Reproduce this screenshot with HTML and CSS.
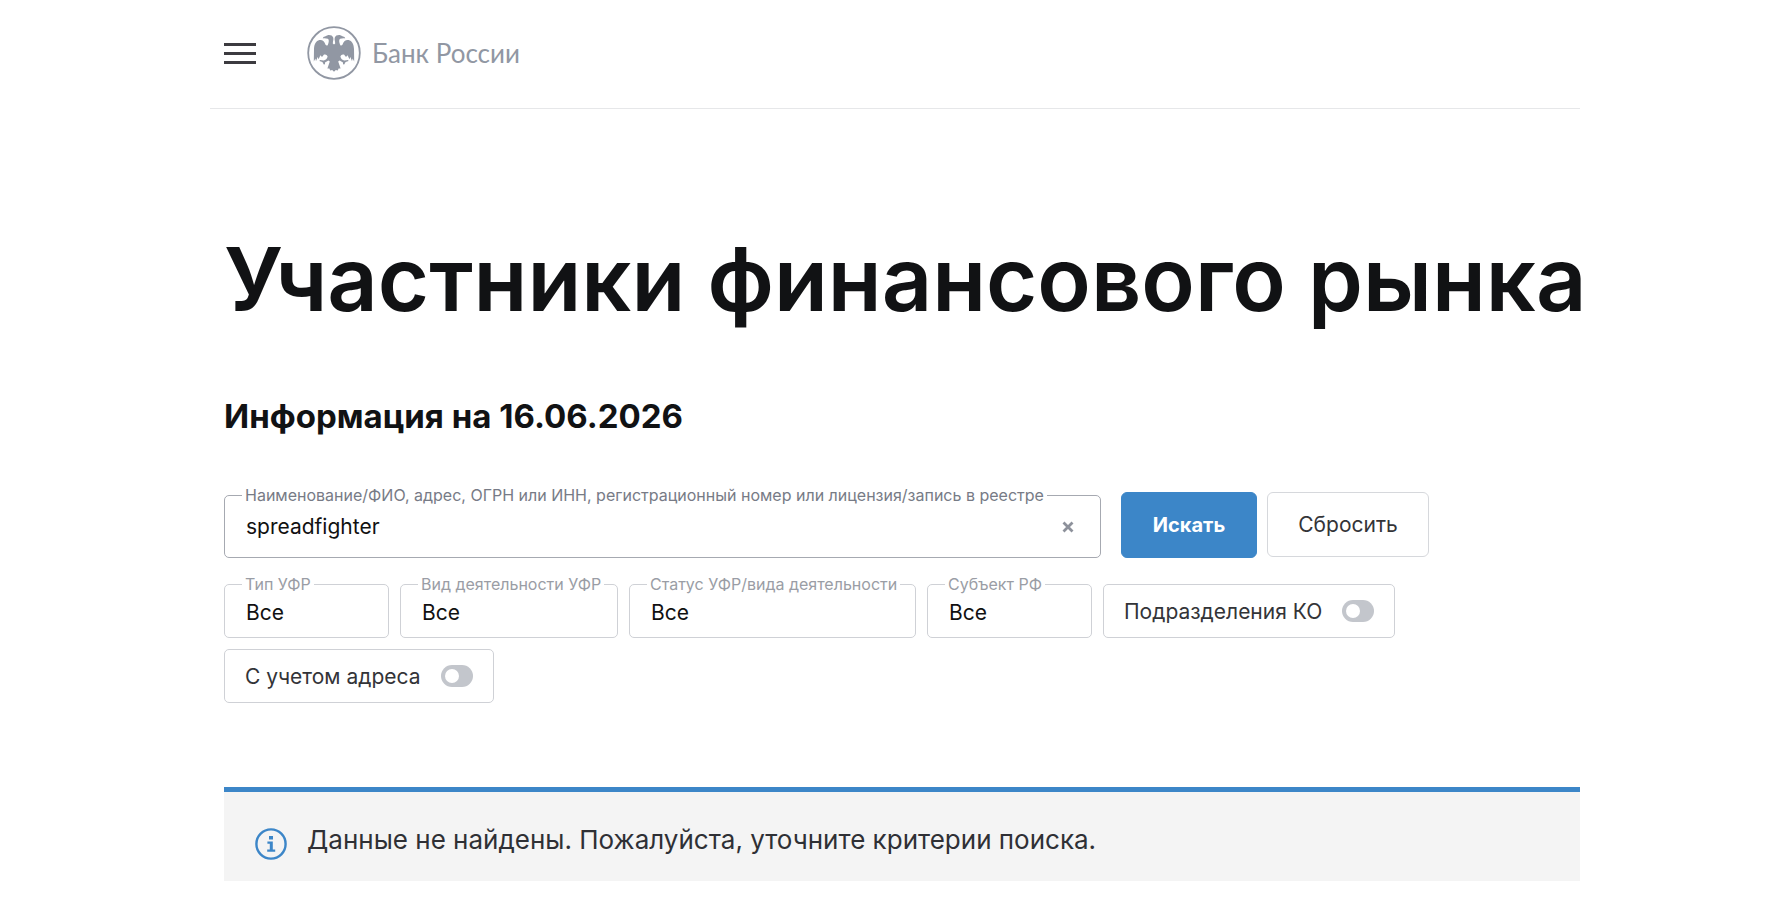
FILE: index.html
```html
<!DOCTYPE html>
<html lang="ru">
<head>
    <meta charset="UTF-8">
    <meta name="viewport" content="width=device-width, initial-scale=1.0">
    <title>Участники финансового рынка | Банк России</title>
    <link rel="stylesheet" href="styles.css">
</head>
<body>

<div class="page">
    <header class="header">
        <button class="menu-btn" type="button" aria-label="Меню">
            <span></span>
            <span></span>
            <span></span>
        </button>
        <a class="logo" href="#">
            <svg class="logo-icon" viewBox="0 0 54 54" aria-hidden="true">
                <circle cx="27" cy="27" r="25.8" fill="none" stroke="currentColor" stroke-width="1.8"/>
                <path fill="currentColor" d="M27 18.5 L25.8 17.5 C25.9 15 26.8 13.6 26.2 11.6 C25.5 9.6 23.2 8.8 20.8 9.2 C19.6 9.5 18.8 10.6 16.4 10.9 L15.8 12.4 C17.8 12 19.4 12.4 20.8 12.8 C22.2 13.6 22 15.8 21 18.4 C20.2 20.4 18.6 19.6 18 17.6 C17.4 15.2 15 13.4 12.4 14 C9 14.8 7.2 18 7 23 L6.8 35.6 L8.4 32.6 L9 35.2 L10.6 31 L11.6 33.2 L13.4 29.2 L15 31 L17 28.6 C18.4 28 20 28.6 20.6 30.4 C20.2 32.6 18.6 34 16.6 34.6 L13 34 L12.4 35 L15.4 36 L16.8 38.4 L18 38.2 L18 36.4 L21.4 34.6 L22.8 35.4 L20.4 42.6 L22.4 42.6 L23.2 44.6 L25.2 44 L27 45.8 L28.8 44 L30.8 44.6 L31.6 42.6 L33.6 42.6 L31.2 35.4 L32.6 34.6 L36 36.4 L36 38.2 L37.2 38.4 L38.6 36 L41.6 35 L41 34 L37.4 34.6 C35.4 34 33.8 32.6 33.4 30.4 C34 28.6 35.6 28 37 28.6 L39 31 L40.6 29.2 L42.4 33.2 L43.4 31 L45 35.2 L45.6 32.6 L47.2 35.6 L47 23 C46.8 18 45 14.8 41.6 14 C39 13.4 36.6 15.2 36 17.6 C35.4 19.6 33.8 20.4 33 18.4 C32 15.8 31.8 13.6 33.2 12.8 C34.6 12.4 36.2 12 38.2 12.4 L37.6 10.9 C35.2 10.6 34.4 9.5 33.2 9.2 C30.8 8.8 28.5 9.6 27.8 11.6 C27.2 13.6 28.1 15 28.2 17.5 Z"/>
            </svg>
            <span class="logo-text">Банк России</span>
        </a>
    </header>

    <main class="content">
        <h1>Участники финансового рынка</h1>
        <h2>Информация на 16.06.2026</h2>

        <form class="search-form" onsubmit="return false">
            <div class="search-row">
                <div class="field field-search">
                    <label for="search">Наименование/ФИО, адрес, ОГРН или ИНН, регистрационный номер или лицензия/запись в реестре</label>
                    <input type="text" id="search" value="spreadfighter">
                    <button class="clear-btn" type="button" aria-label="Очистить">
                        <svg viewBox="0 0 12 12" aria-hidden="true">
                            <path d="M1.5 1.5 L10.5 10.5 M10.5 1.5 L1.5 10.5" stroke="currentColor" stroke-width="2.8"/>
                        </svg>
                    </button>
                </div>
                <div class="buttons">
                    <button class="btn btn-primary" type="submit">Искать</button>
                    <button class="btn btn-reset" type="reset">Сбросить</button>
                </div>
            </div>

            <div class="filters">
                <div class="field field-small">
                    <label for="type">Тип УФР</label>
                    <select id="type"><option>Все</option></select>
                </div>
                <div class="field field-medium">
                    <label for="activity">Вид деятельности УФР</label>
                    <select id="activity"><option>Все</option></select>
                </div>
                <div class="field field-large">
                    <label for="status">Статус УФР/вида деятельности</label>
                    <select id="status"><option>Все</option></select>
                </div>
                <div class="field field-small">
                    <label for="region">Субъект РФ</label>
                    <select id="region"><option>Все</option></select>
                </div>
                <label class="toggle" for="branches">
                    Подразделения КО
                    <input type="checkbox" id="branches">
                </label>
                <label class="toggle" for="address">
                    С учетом адреса
                    <input type="checkbox" id="address">
                </label>
            </div>
        </form>

        <div class="message">
            <svg class="message-icon" viewBox="0 0 32 32" aria-hidden="true">
                <circle cx="16" cy="16" r="14.6" fill="none" stroke="currentColor" stroke-width="2.4"/>
                <path fill="currentColor" d="M14 8h4v3.4h-4z M12.4 13.4h5.4v8h2.4v2.4h-8v-2.4h2.6v-5.6h-2.4z"/>
            </svg>
            <p>Данные не найдены. Пожалуйста, уточните критерии поиска.</p>
        </div>
    </main>
</div>

</body>
</html>
```

FILE: styles.css
```css
* {
    box-sizing: border-box;
}
body {
    margin: 0;
    padding-right: 2px;
    background-color: #fff;
    color: #111214;
    font-family: Inter, Roboto, sans-serif;
    font-size: 21px;
}
button, input, select {
    font-family: inherit;
    font-size: 21px;
}
.page {
    max-width: 1370px;
    margin: 0 auto;
}
.header {
    display: flex;
    align-items: center;
    gap: 51px;
    height: 109px;
    padding: 0 0 2px 14px;
    border-bottom: 1px solid #e6e7e9;
}
.menu-btn {
    display: flex;
    flex-direction: column;
    gap: 6px;
    width: 32px;
    padding: 0;
    border: none;
    background: none;
    cursor: pointer;
}
.menu-btn span {
    height: 3px;
    background-color: #3c3b40;
}
.logo {
    display: flex;
    align-items: center;
    gap: 11px;
    color: #9197a3;
    text-decoration: none;
}
.logo-icon {
    width: 54px;
    height: 54px;
}
.logo-text {
    font-family: Lato, "Open Sans", sans-serif;
    font-size: 26px;
    line-height: 32px;
}
.content {
    padding-left: 14px;
}
h1 {
    margin: 117px 0 0;
    font-size: 88px;
    font-weight: 600;
    line-height: 106px;
    white-space: nowrap;
}
h2 {
    margin: 64px 0 56px;
    font-size: 33px;
    font-weight: 700;
    line-height: 40px;
}
.search-row {
    display: flex;
    gap: 20px;
    margin-bottom: 26px;
}
.field {
    position: relative;
    border: 1px solid #cfd1d6;
    border-radius: 5px;
}
.field label {
    position: absolute;
    top: -10px;
    left: 17px;
    padding: 0 3px;
    background-color: #fff;
    color: #9a9da5;
    font-size: 16px;
    line-height: 18px;
    white-space: nowrap;
}
.field input,
.field select {
    width: 100%;
    height: 100%;
    padding: 2px 21px 0;
    border: none;
    outline: none;
    background: none;
    color: #111;
    appearance: none;
}
.field-search {
    flex: 0 1 877px;
    height: 63px;
    margin-top: 3px;
    border-color: #a6a9b1;
}
.field-search label {
    color: #777b86;
}
.field-search input {
    padding: 0 60px 0 21px;
}
.clear-btn {
    position: absolute;
    top: 50%;
    right: 26px;
    width: 12px;
    height: 12px;
    margin-top: -6px;
    padding: 0;
    border: none;
    background: none;
    color: #8d919b;
    cursor: pointer;
}
.clear-btn svg {
    display: block;
}
.buttons {
    display: flex;
    align-items: flex-start;
    gap: 10px;
}
.btn {
    height: 65px;
    border: 1px solid #d6d8dc;
    border-radius: 6px;
    background-color: #fff;
    color: #333438;
    cursor: pointer;
}
.btn-primary {
    width: 136px;
    height: 66px;
    border-color: #3c86c8;
    background-color: #3c86c8;
    color: #fff;
    font-size: 20px;
    font-weight: 700;
}
.btn-reset {
    width: 162px;
}
.filters {
    display: flex;
    flex-wrap: wrap;
    gap: 11px;
}
.filters .field,
.toggle {
    height: 54px;
}
.field-small {
    width: 165px;
}
.field-medium {
    width: 218px;
}
.field-large {
    width: 287px;
}
.toggle {
    display: flex;
    align-items: center;
    gap: 20px;
    padding: 0 20px;
    border: 1px solid #cfd1d6;
    border-radius: 5px;
    color: #333438;
    cursor: pointer;
}
.toggle input {
    display: flex;
    align-items: center;
    width: 32px;
    height: 22px;
    margin: 0;
    padding: 0 4px;
    border-radius: 11px;
    background-color: #c3c6cc;
    appearance: none;
}
.toggle input::before {
    content: "";
    width: 14px;
    height: 14px;
    border-radius: 50%;
    background-color: #fff;
}
.toggle input:checked {
    justify-content: flex-end;
    background-color: #3c86c8;
}
.message {
    display: flex;
    align-items: flex-end;
    gap: 20px;
    margin-top: 84px;
    padding: 28px 31px 21px;
    border-top: 5px solid #3c86c8;
    background-color: #f4f4f4;
    color: #2f3035;
}
.message p {
    margin: 0;
    font-size: 26px;
    line-height: 40px;
}
.message-icon {
    flex: none;
    width: 32px;
    height: 32px;
    color: #3c86c8;
}
```
